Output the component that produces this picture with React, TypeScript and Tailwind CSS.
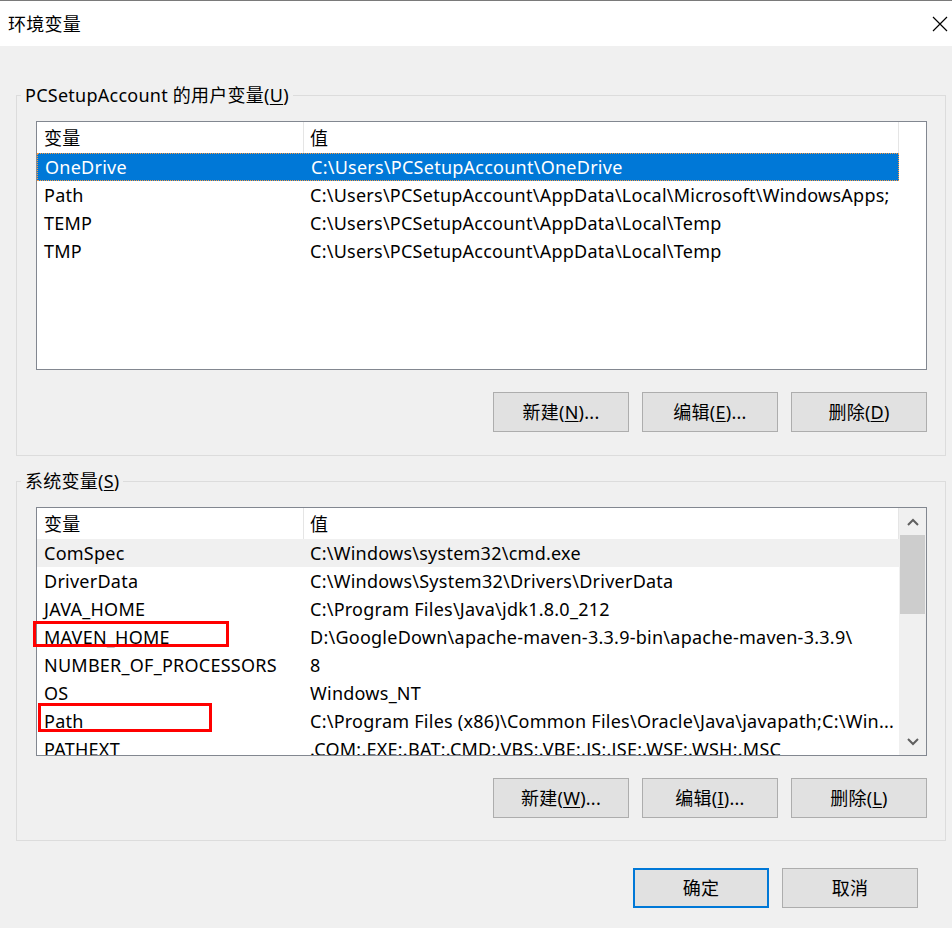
import React from 'react'

type Row = { name: string; value: string }

const userVars: Row[] = [
  { name: 'OneDrive', value: 'C:\\Users\\PCSetupAccount\\OneDrive' },
  { name: 'Path', value: 'C:\\Users\\PCSetupAccount\\AppData\\Local\\Microsoft\\WindowsApps;' },
  { name: 'TEMP', value: 'C:\\Users\\PCSetupAccount\\AppData\\Local\\Temp' },
  { name: 'TMP', value: 'C:\\Users\\PCSetupAccount\\AppData\\Local\\Temp' },
]

const sysVars: Row[] = [
  { name: 'ComSpec', value: 'C:\\Windows\\system32\\cmd.exe' },
  { name: 'DriverData', value: 'C:\\Windows\\System32\\Drivers\\DriverData' },
  { name: 'JAVA_HOME', value: 'C:\\Program Files\\Java\\jdk1.8.0_212' },
  { name: 'MAVEN_HOME', value: 'D:\\GoogleDown\\apache-maven-3.3.9-bin\\apache-maven-3.3.9\\' },
  { name: 'NUMBER_OF_PROCESSORS', value: '8' },
  { name: 'OS', value: 'Windows_NT' },
  { name: 'Path', value: 'C:\\Program Files (x86)\\Common Files\\Oracle\\Java\\javapath;C:\\Win...' },
  { name: 'PATHEXT', value: '.COM;.EXE;.BAT;.CMD;.VBS;.VBE;.JS;.JSE;.WSF;.WSH;.MSC' },
]

function Mnemonic({ text, u, tail = '' }: { text: string; u: string; tail?: string }) {
  return (
    <span>
      {text}(<span className="underline underline-offset-2">{u}</span>){tail}
    </span>
  )
}

function Btn({ children, primary }: { children: React.ReactNode; primary?: boolean }) {
  return (
    <button
      className={
        primary
          ? 'w-[136px] h-[40px] bg-[#e1e1e1] border-2 border-[#0078d7] flex items-center justify-center text-[18px] text-black'
          : 'w-[136px] h-[40px] bg-[#e1e1e1] border border-[#adadad] flex items-center justify-center text-[18px] text-black'
      }
    >
      {children}
    </button>
  )
}

function Chevron({ up }: { up?: boolean }) {
  return (
    <svg width="12" height="8" viewBox="0 0 12 8">
      <polyline
        points={up ? '1,7 6,2 11,7' : '1,1 6,6 11,1'}
        fill="none"
        stroke="#606060"
        strokeWidth="2"
      />
    </svg>
  )
}

function VarList({ rows, selected, hover, scroll }: { rows: Row[]; selected?: number; hover?: number; scroll?: boolean }) {
  return (
    <div className="flex h-[249px] border border-[#828790] bg-white overflow-hidden">
      <div className="w-[862px] shrink-0">
        <div className="flex h-[31px] items-center">
          <div className="w-[267px] h-full pl-[7px] flex items-center border-r border-[#e5e5e5]">变量</div>
          <div className="flex-1 h-full pl-[6px] flex items-center border-r border-[#e5e5e5]">值</div>
        </div>
        {rows.map((r, i) => {
          let cls = 'flex h-[28px] items-center'
          if (i === selected) cls += ' bg-[#0078d7] text-white border border-dotted border-[#ff9a3c]'
          else if (i === hover) cls += ' bg-[#f0f0f0]'
          return (
            <div key={r.name} className={cls}>
              <div className="w-[267px] shrink-0 pl-[7px] whitespace-nowrap">{r.name}</div>
              <div className="flex-1 min-w-0 pl-[6px] whitespace-nowrap overflow-hidden">{r.value}</div>
            </div>
          )
        })}
      </div>
      {scroll && (
        <div className="w-[27px] shrink-0 bg-[#f0f0f0] flex flex-col">
          <div className="h-[27px] flex items-center justify-center">
            <Chevron up />
          </div>
          <div className="flex-1 px-[1px]">
            <div className="h-[79px] bg-[#cdcdcd]" />
          </div>
          <div className="h-[27px] flex items-center justify-center">
            <Chevron />
          </div>
        </div>
      )}
      {!scroll && <div className="flex-1" />}
    </div>
  )
}

export default function App() {
  return (
    <div className="w-[952px] h-[928px] bg-[#f0f0f0] text-black text-[18px] leading-[24px] tracking-[0.25px] font-['Noto_Sans','Noto_Sans_CJK_SC',sans-serif] overflow-hidden">
      <div className="h-[46px] bg-white border-t border-[#7a7a7a] flex items-center justify-between pl-[8px] pr-[4px]">
        <span>环境变量</span>
        <svg width="16" height="16" viewBox="0 0 16 16">
          <path d="M1 1 L15 15 M15 1 L1 15" stroke="#000" strokeWidth="1.2" />
        </svg>
      </div>

      <div className="pl-[16px]">
        <fieldset className="w-[930px] mt-[37px] border border-[#dcdcdc] pl-[19px] pr-[18px] pt-[14px] pb-[23px]">
          <legend className="-ml-[15px] px-[4px]">
            PCSetupAccount 的用户变量<Mnemonic text="" u="U" />
          </legend>
          <VarList rows={userVars} selected={0} />
          <div className="flex justify-end gap-[13px] mt-[22px]">
            <Btn><Mnemonic text="新建" u="N" tail="..." /></Btn>
            <Btn><Mnemonic text="编辑" u="E" tail="..." /></Btn>
            <Btn><Mnemonic text="删除" u="D" /></Btn>
          </div>
        </fieldset>

        <fieldset className="w-[930px] mt-[13px] border border-[#dcdcdc] pl-[19px] pr-[18px] pt-[14px] pb-[22px]">
          <legend className="-ml-[15px] px-[4px]">
            <Mnemonic text="系统变量" u="S" />
          </legend>
          <div className="relative">
            <VarList rows={sysVars} hover={0} scroll />
            <div className="absolute left-[-3px] top-[114px] w-[196px] h-[26px] border-[3px] border-[#ff0000]" />
            <div className="absolute left-[2px] top-[196px] w-[174px] h-[29px] border-[3px] border-[#ff0000]" />
          </div>
          <div className="flex justify-end gap-[13px] mt-[22px]">
            <Btn><Mnemonic text="新建" u="W" tail="..." /></Btn>
            <Btn><Mnemonic text="编辑" u="I" tail="..." /></Btn>
            <Btn><Mnemonic text="删除" u="L" /></Btn>
          </div>
        </fieldset>

        <div className="flex justify-end gap-[13px] mt-[27px] pr-[34px] w-[952px] -ml-[16px]">
          <Btn primary>确定</Btn>
          <Btn>取消</Btn>
        </div>
      </div>
    </div>
  )
}
